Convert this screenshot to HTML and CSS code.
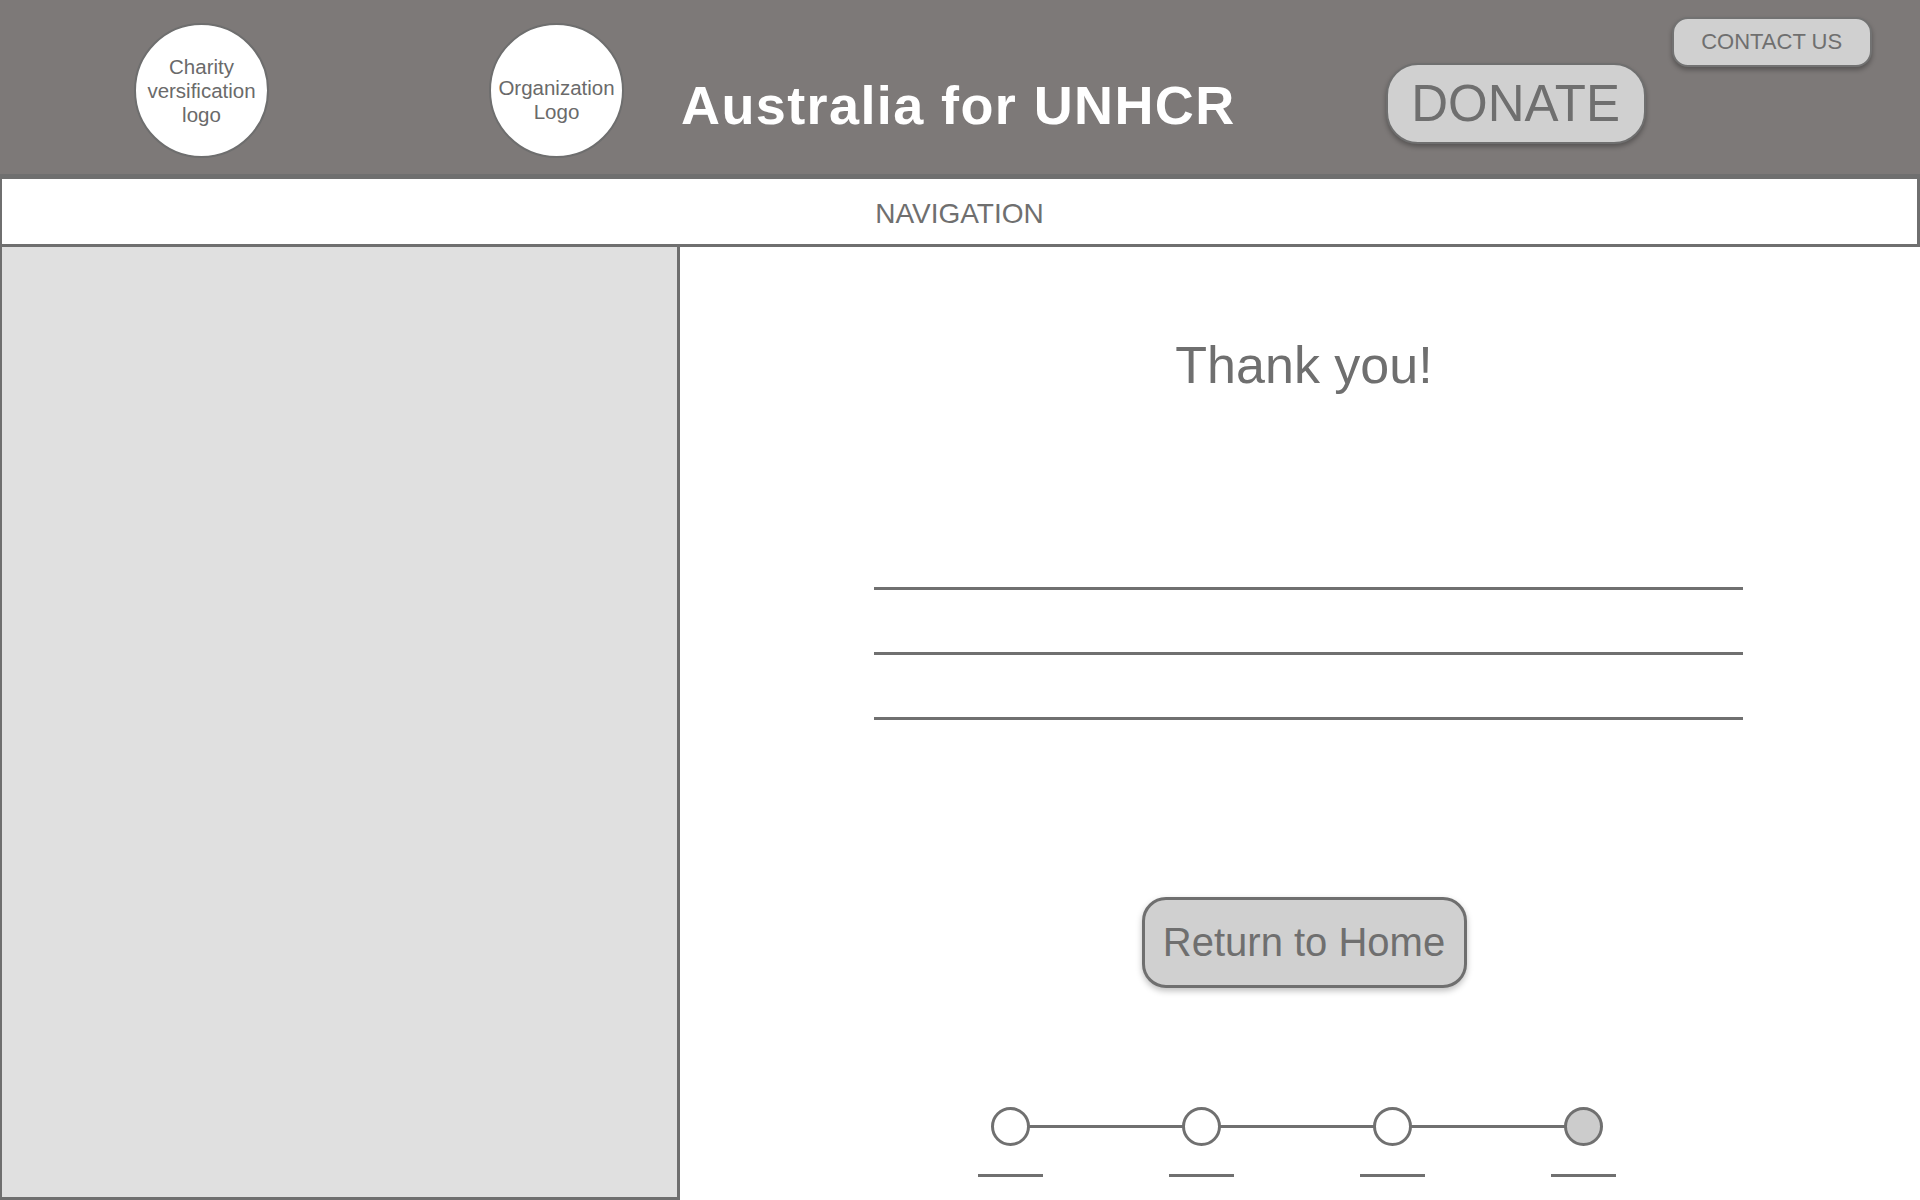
FILE: index.html
```html
<!DOCTYPE html>
<html lang="en">
<head>
<meta charset="utf-8">
<title>Australia for UNHCR - Thank you</title>
<link rel="stylesheet" href="styles.css">
</head>
<body>
<div class="page">
  <header class="header">
    <div class="logo logo-charity">Charity<br>versification<br>logo</div>
    <div class="logo logo-org"><span>Organization<br>Logo</span></div>
    <h1 class="title">Australia for UNHCR</h1>
    <button class="btn-donate">DONATE</button>
    <button class="btn-contact">CONTACT US</button>
  </header>
  <nav class="nav">NAVIGATION</nav>
  <div class="content">
    <aside class="sidebar"></aside>
    <main class="main">
      <h2 class="thanks">Thank you!</h2>
      <div class="lines">
        <div class="line"></div>
        <div class="line"></div>
        <div class="line"></div>
      </div>
      <button class="btn-home">Return to Home</button>
      <div class="stepper">
        <div class="step"><div class="dot"></div><div class="under"></div></div>
        <div class="connector"></div>
        <div class="step"><div class="dot"></div><div class="under"></div></div>
        <div class="connector"></div>
        <div class="step"><div class="dot"></div><div class="under"></div></div>
        <div class="connector"></div>
        <div class="step"><div class="dot dot-active"></div><div class="under"></div></div>
      </div>
    </main>
  </div>
</div>
</body>
</html>
```

FILE: styles.css
```css
* { box-sizing: border-box; }
html, body {
  margin: 0;
  padding: 0;
  width: 1920px;
  height: 1200px;
  overflow: hidden;
  background: #ffffff;
  font-family: "Liberation Sans", Arial, Helvetica, sans-serif;
  color: #6f6f6f;
}
.page {
  display: flex;
  flex-direction: column;
  height: 1200px;
}
.header {
  height: 176px;
  background: #7d7978;
  border-bottom: 2px solid #6f6f6f;
  display: flex;
  align-items: flex-start;
  padding-left: 134px;
  flex-shrink: 0;
}
.logo {
  width: 135px;
  height: 135px;
  border-radius: 50%;
  background: #ffffff;
  border: 2px solid #6e6e6e;
  margin-top: 23px;
  display: flex;
  align-items: center;
  justify-content: center;
  text-align: center;
  font-size: 20.5px;
  line-height: 24px;
  color: #6a6a6a;
}
.logo-charity { margin-right: 220px; }
.logo-org span { padding-top: 18px; }
.title {
  margin: 75px 0 0 57px;
  font-size: 54px;
  line-height: 60px;
  font-weight: bold;
  letter-spacing: 1.4px;
  color: #ffffff;
  white-space: nowrap;
}
.btn-donate {
  margin: 63px 0 0 150px;
  width: 260px;
  height: 81px;
  border-radius: 32px;
  background: #d0d0d0;
  border: 2px solid #6f6f6f;
  box-shadow: 0 3px 5px rgba(0, 0, 0, 0.3);
  font-family: "Liberation Sans", Arial, sans-serif;
  font-size: 51px;
  color: #6f6f6f;
  padding: 0;
  line-height: 1;
}
.btn-contact {
  margin: 17px 0 0 26px;
  width: 200px;
  height: 50px;
  border-radius: 16px;
  background: #d0d0d0;
  border: 2px solid #727272;
  box-shadow: 0 3px 5px rgba(0, 0, 0, 0.3);
  font-family: "Liberation Sans", Arial, sans-serif;
  font-size: 22px;
  color: #6f6f6f;
  padding: 0;
}
.nav {
  height: 71px;
  border: 3px solid #6f6f6f;
  border-left-width: 2px;
  display: flex;
  align-items: center;
  justify-content: center;
  padding-top: 4px;
  font-size: 28px;
  color: #6f6f6f;
  flex-shrink: 0;
}
.content {
  flex: 1;
  display: grid;
  grid-template-columns: 680px 1fr;
  min-height: 0;
}
.sidebar {
  background: #e0e0e0;
  border-left: 2px solid #6f6f6f;
  border-right: 3px solid #6f6f6f;
  border-bottom: 3px solid #6f6f6f;
}
.main {
  display: flex;
  flex-direction: column;
  align-items: center;
  padding-left: 8px;
}
.thanks {
  margin: 88px 0 0 0;
  font-size: 52px;
  line-height: 60px;
  font-weight: normal;
  color: #6f6f6f;
}
.lines {
  margin-top: 192px;
  display: flex;
  flex-direction: column;
  gap: 62px;
  padding-left: 8px;
}
.line {
  width: 869px;
  height: 3px;
  background: #707070;
}
.btn-home {
  margin-top: 177px;
  width: 325px;
  height: 91px;
  border-radius: 24px;
  background: #d0d0d0;
  border: 3px solid #6f6f6f;
  box-shadow: 0 3px 6px rgba(0, 0, 0, 0.25);
  font-family: "Liberation Sans", Arial, sans-serif;
  font-size: 40px;
  color: #6f6f6f;
  padding: 0;
}
.stepper {
  margin-top: 119px;
  margin-right: 14px;
  display: flex;
  align-items: flex-start;
}
.step {
  width: 65px;
  display: flex;
  flex-direction: column;
  align-items: center;
  position: relative;
}
.dot {
  width: 39px;
  height: 39px;
  border-radius: 50%;
  border: 3px solid #707070;
  background: #ffffff;
  position: relative;
  z-index: 1;
}
.dot-active { background: #cccccc; }
.under {
  margin-top: 28px;
  width: 65px;
  height: 3px;
  background: #707070;
}
.connector {
  width: 154px;
  height: 3px;
  margin: 18px -14px 0;
  background: #707070;
}
```
